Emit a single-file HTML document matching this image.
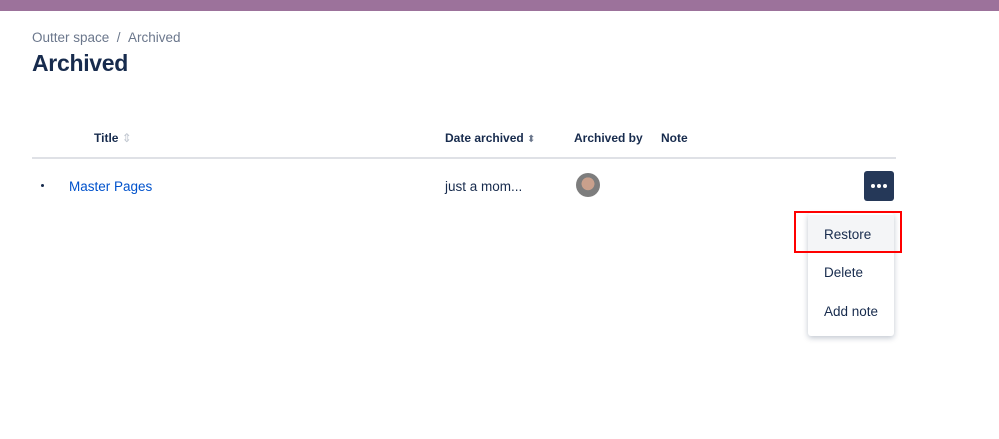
<!DOCTYPE html>
<html><head><style>
body{margin:0;width:999px;height:439px;background:#fff;font-family:"Liberation Sans",sans-serif;position:relative;overflow:hidden}
div,span{position:absolute}
.bar{left:0;top:0;width:999px;height:11px;background:#9c729b}
.bc{left:32px;top:30px;font-size:13.5px;color:#6b778c}
h1{position:absolute;margin:0;left:32px;top:50px;font-size:23px;font-weight:bold;color:#172b4d;letter-spacing:-.3px}
.th{top:131px;font-size:12px;font-weight:bold;color:#172b4d}
.line{left:32px;top:157px;width:864px;height:2px;background:#dfe1e6}
.td{top:179px;font-size:13.5px;color:#172b4d}
.btn{left:864px;top:171px;width:30px;height:30px;background:#253858;border-radius:3px}
.dot{width:4px;height:4px;border-radius:2px;background:#fff;top:13px}
.menu{left:808px;top:213px;width:86px;height:123px;background:#fff;border-radius:3px;box-shadow:0 2px 6px rgba(9,30,66,.25)}
.it{left:16px;font-size:13.5px;color:#172b4d}
.red{left:794px;top:211px;width:104px;height:38px;border:2px solid #f00}
</style></head><body>
<div class="bar"></div>
<div class="bc">Outter space &nbsp;/ &nbsp;Archived</div>
<h1>Archived</h1>
<div class="th" style="left:94px">Title <span style="position:static;color:#c1c7d0;font-weight:normal">⇕</span></div>
<div class="th" style="left:445px">Date archived <span style="position:static;color:#6b778c;font-weight:normal;font-size:10px">⬍</span></div>
<div class="th" style="left:574px">Archived by</div>
<div class="th" style="left:661px">Note</div>
<div class="line"></div>
<div style="left:41px;top:184px;width:3px;height:3px;border-radius:2px;background:#172b4d"></div>
<div class="td" style="left:69px;color:#0052cc">Master Pages</div>
<div class="td" style="left:445px">just a mom...</div>
<div style="left:576px;top:173px;width:24px;height:24px;border-radius:12px;background:radial-gradient(circle at 50% 45%,#c9a08c 0 35%,#7d7d7d 37%)"></div>
<div class="btn"><div class="dot" style="left:7px"></div><div class="dot" style="left:13px"></div><div class="dot" style="left:19px"></div></div>
<div class="menu">
<div style="left:0;top:2px;width:86px;height:38px;background:#f4f5f7"></div>
<div class="it" style="top:14px">Restore</div>
<div class="it" style="top:52px">Delete</div>
<div class="it" style="top:91px">Add note</div>
</div>
<div class="red"></div>
</body></html>
